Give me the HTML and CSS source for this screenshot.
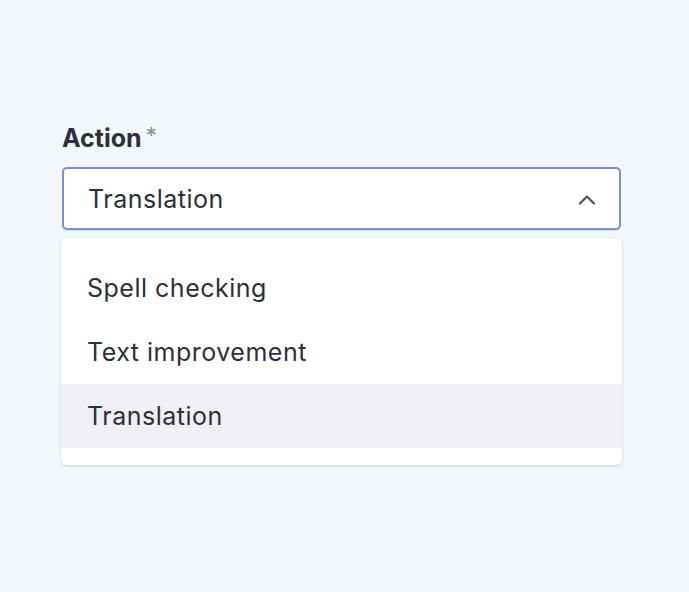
FILE: index.html
```html
<!DOCTYPE html>
<html>
<head>
<meta charset="utf-8">
<link rel="stylesheet" href="styles.css">
</head>
<body>
<div class="field">
  <div class="label">Action<span class="req">*</span></div>
  <div class="select">
    <span class="value">Translation</span>
    <svg class="chev" width="18" height="11" viewBox="0 0 18 11"><path d="M2 9.5 L9 2.5 L16 9.5" fill="none" stroke="#51555d" stroke-width="2.3" stroke-linecap="round" stroke-linejoin="round"/></svg>
  </div>
  <ul class="menu">
    <li class="item">Spell checking</li>
    <li class="item">Text improvement</li>
    <li class="item active">Translation</li>
  </ul>
</div>
</body>
</html>
```
FILE: styles.css
```css
html, body { margin: 0; padding: 0; }
body {
  background: #f3f6fb;
  width: 689px;
  height: 592px;
  font-family: Inter, Lato, sans-serif;
  color: #2b303b;
}
.field {
  padding: 122px 0 0 61px;
  width: 561px;
}
.label {
  font-size: 25px;
  font-weight: 700;
  line-height: 32px;
  margin-left: 1px;
  color: #2b303b;
}
.req {
  font-weight: 400;
  color: #8a8f99;
  font-size: 22px;
  margin-left: 4px;
  vertical-align: top;
  position: relative;
  top: -3px;
}
.select {
  margin-top: 13px;
  margin-left: 1px;
  height: 59px;
  width: 508px;
  border: 2px solid #7392d2;
  border-radius: 5px;
  background: #fff;
  display: flex;
  align-items: center;
  justify-content: space-between;
  padding: 0 23px 0 24px;
  box-sizing: content-box;
  box-shadow: 0 1px 0 #d6dff0;
}
.value { font-size: 25px; letter-spacing: 0.5px; }
.chev { margin-top: 2px; }
.menu {
  list-style: none;
  margin: 8px 0 0 0;
  padding: 18px 0 17px 0;
  background: #fff;
  border-radius: 6px;
  box-shadow: 0 1px 3px rgba(40,50,80,0.18);
  width: 561px;
}
.item {
  height: 64px;
  line-height: 64px;
  padding-left: 26px;
  font-size: 25px;
  letter-spacing: 0.5px;
}
.item.active { background: #f0f0f4; }
```
